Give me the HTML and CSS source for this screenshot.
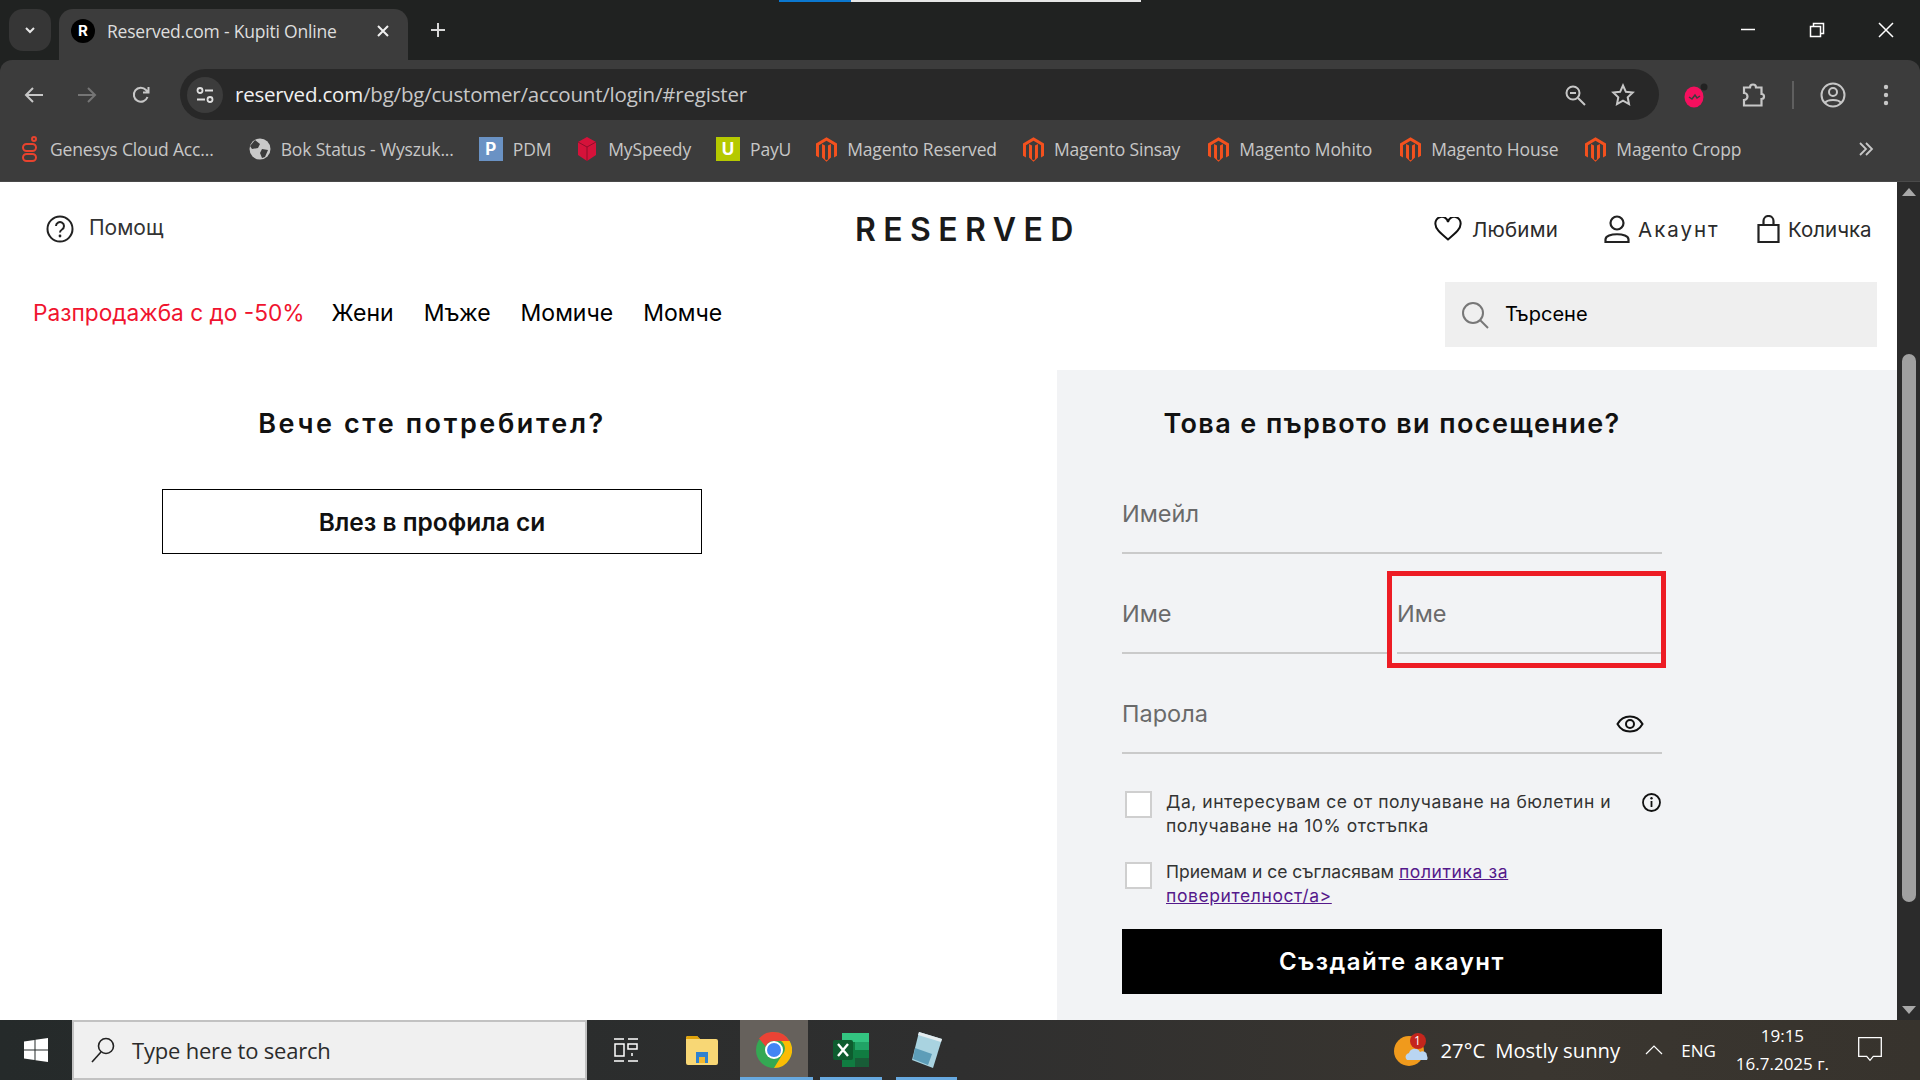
FILE: index.html
```html
<!DOCTYPE html>
<html lang="bg">
<head>
<meta charset="utf-8">
<title>Reserved.com - Kupiti Online</title>
<link rel="stylesheet" href="styles.css">
</head>
<body>
<svg class="defs" width="0" height="0" aria-hidden="true">
  <symbol id="magento" viewBox="0 0 24 28">
    <path fill="#f4511e" d="M12 0 24 7v14l-3.400 2V9L12 4 3.400 9v14L0 21V7z"/>
    <path fill="#f4511e" d="M10.300 9.500v15.700L12 26.200l1.700-1V9.500l3.400-1.900v15.500L12 28l-5.100-4.900V7.600z"/>
  </symbol>
</svg>

<div class="loadbar"><span class="load-blue"></span><span class="load-white"></span></div>

<header class="tabstrip">
  <div class="tab-search"><svg width="14" height="14" viewBox="0 0 14 14"><path d="M3 5l4 4 4-4" fill="none" stroke="#e6e6e6" stroke-width="2"/></svg></div>
  <div class="tab">
    <span class="favicon">R</span>
    <span class="tab-title">Reserved.com - Kupiti Online</span>
    <svg class="tab-close" width="14" height="14" viewBox="0 0 14 14"><path d="M2 2l10 10M12 2L2 12" stroke="#f0f0f0" stroke-width="2"/></svg>
  </div>
  <svg class="new-tab" width="18" height="18" viewBox="0 0 18 18"><path d="M9 2v14M2 9h14" stroke="#d8d8d8" stroke-width="2"/></svg>
  <div class="win-controls">
    <svg width="16" height="16" viewBox="0 0 16 16"><path d="M1 7.500h14" stroke="#fff" stroke-width="1.500"/></svg>
    <svg width="16" height="16" viewBox="0 0 16 16"><path d="M1.500 4.500h10v10h-10zM4.500 4.500v-3h10v10h-3" fill="none" stroke="#fff" stroke-width="1.500"/></svg>
    <svg width="16" height="16" viewBox="0 0 16 16"><path d="M1 1l14 14M15 1L1 15" stroke="#fff" stroke-width="1.500"/></svg>
  </div>
</header>

<div class="toolbar">
  <svg class="nav-btn" width="22" height="22" viewBox="0 0 22 22"><path d="M20 11H3M10 4l-7 7 7 7" fill="none" stroke="#c7c7c7" stroke-width="2"/></svg>
  <svg class="nav-btn" width="22" height="22" viewBox="0 0 22 22"><path d="M2 11h17M12 4l7 7-7 7" fill="none" stroke="#757575" stroke-width="2"/></svg>
  <svg class="nav-btn" width="22" height="22" viewBox="0 0 22 22"><path d="M17.500 13a7 7 0 1 1-1.500-7l2 2M18.500 3v5.500H13" fill="none" stroke="#c7c7c7" stroke-width="2"/></svg>
  <div class="omnibox">
    <span class="site-info"><svg width="20" height="20" viewBox="0 0 20 20"><g fill="none" stroke="#e0e0e0" stroke-width="1.800"><circle cx="5" cy="5.500" r="2.500"/><circle cx="15" cy="14.500" r="2.500"/><path d="M10 5.500h8M2 14.500h8"/></g></svg></span>
    <span class="url">reserved.com<span class="url-dim">/bg/bg/customer/account/login/#register</span></span>
    <svg class="omni-icon" width="24" height="24" viewBox="0 0 24 24"><g fill="none" stroke="#c7c7c7" stroke-width="2"><circle cx="10" cy="10" r="6.500"/><path d="M7 10h6M15 15l7 7"/></g></svg>
    <svg class="omni-icon" width="24" height="24" viewBox="0 0 24 24"><path d="M12 2.500l2.900 6.300 6.800.8-5 4.700 1.300 6.800-6-3.400-6 3.400 1.300-6.800-5-4.700 6.800-.8z" fill="none" stroke="#c7c7c7" stroke-width="2"/></svg>
  </div>
  <svg class="ext" width="26" height="26" viewBox="0 0 26 26"><ellipse cx="11" cy="15" rx="9.500" ry="10.500" fill="#f50f5e"/><path d="M6 15l3 2 3-4 2 3 3-2" fill="none" stroke="#3c3c3c" stroke-width="1.500"/><circle cx="21" cy="5" r="3.500" fill="#222"/></svg>
  <svg class="ext-puzzle" width="26" height="26" viewBox="0 0 26 26"><path d="M3 5.500h6a3 3 0 0 1 6 0h5.500v6.500a2.500 2.500 0 0 1 0 5v6.500H3V18a3 3 0 0 0 0-7z" fill="none" stroke="#c7c7c7" stroke-width="2.200"/></svg>
  <span class="tool-sep"></span>
  <svg class="profile" width="26" height="26" viewBox="0 0 26 26"><g fill="none" stroke="#c7c7c7" stroke-width="2"><circle cx="13" cy="13" r="11.500"/><circle cx="13" cy="10" r="4"/><path d="M5 21c2-4 14-4 16 0"/></g></svg>
  <svg class="menu" width="6" height="24" viewBox="0 0 6 24"><g fill="#c7c7c7"><circle cx="3" cy="4" r="2.200"/><circle cx="3" cy="12" r="2.200"/><circle cx="3" cy="20" r="2.200"/></g></svg>
</div>

<nav class="bookmarks">
  <span class="bm bm-genesys"><svg width="20" height="28" viewBox="0 0 20 28"><g fill="none" stroke="#e8432e" stroke-width="2"><circle cx="14" cy="4" r="2"/><rect x="3" y="9" width="13" height="7" rx="3.500"/><rect x="3" y="19" width="13" height="7" rx="3.500"/></g></svg>Genesys Cloud Acc...</span>
  <span class="bm bm-bok"><svg width="22" height="22" viewBox="0 0 22 22"><circle cx="11" cy="11" r="10.500" fill="#c9c9c9"/><path d="M6 2l5 4-2 4-6 1-2-3zM13 11l6 1-3 7-3 1-2-5z" fill="#3c3c3c"/></svg>Bok Status - Wyszuk...</span>
  <span class="bm bm-pdm"><span class="bm-square bm-blue">P</span>PDM</span>
  <span class="bm bm-speedy"><svg width="22" height="26" viewBox="0 0 22 26"><path d="M11 1l9 5v13l-9 6-9-6V6z" fill="#d5123a"/><path d="M2 6l9 5 9-5M11 11v14" fill="none" stroke="#8e0e2a" stroke-width="1"/></svg>MySpeedy</span>
  <span class="bm bm-payu"><span class="bm-square bm-lime">U</span>PayU</span>
  <span class="bm bm-m1"><svg width="21" height="25"><use href="#magento"/></svg>Magento Reserved</span>
  <span class="bm bm-m2"><svg width="21" height="25"><use href="#magento"/></svg>Magento Sinsay</span>
  <span class="bm bm-m3"><svg width="21" height="25"><use href="#magento"/></svg>Magento Mohito</span>
  <span class="bm bm-m4"><svg width="21" height="25"><use href="#magento"/></svg>Magento House</span>
  <span class="bm bm-m5"><svg width="21" height="25"><use href="#magento"/></svg>Magento Cropp</span>
  <svg class="bm-more" width="16" height="14" viewBox="0 0 16 14"><path d="M2 1l6 6-6 6M8 1l6 6-6 6" fill="none" stroke="#c7c7c7" stroke-width="1.800"/></svg>
</nav>

<div class="viewport">
  <main class="page">
    <div class="top-row">
      <a class="help"><svg width="28" height="28" viewBox="0 0 28 28"><circle cx="14" cy="14" r="12.500" fill="none" stroke="#222" stroke-width="2"/><path d="M10 11a4 4 0 1 1 6 3.500c-1.500.9-2 1.500-2 3" fill="none" stroke="#222" stroke-width="2"/><circle cx="14" cy="21" r="1.400" fill="#222"/></svg><span>Помощ</span></a>
      <div class="logo">RESERVED</div>
      <div class="user-links">
        <a class="user-link link-fav"><svg width="28" height="24" viewBox="0 0 28 24"><path d="M14 22.500C5 15 1.500 11.500 1.500 7.500A6 6 0 0 1 14 5a6 6 0 0 1 12.500 2.500c0 4-3.500 7.500-12.500 15z" fill="none" stroke="#111" stroke-width="2"/></svg><span>Любими</span></a>
        <a class="user-link link-acc"><svg width="26" height="28" viewBox="0 0 26 28"><g fill="none" stroke="#222" stroke-width="2.200"><circle cx="13" cy="8" r="6.500"/><path d="M1.500 27v-2.500c0-7 23-7 23 0V27z"/></g></svg><span>Акаунт</span></a>
        <a class="user-link link-bag"><svg width="23" height="28" viewBox="0 0 23 28"><g fill="none" stroke="#222" stroke-width="2.200"><path d="M1.500 10h20v17h-20z"/><path d="M6.500 10V6a5 5 0 0 1 10 0v4"/></g></svg><span>Количка</span></a>
      </div>
    </div>
    <div class="nav-row">
      <nav class="main-nav">
        <a class="sale">Разпродажба с до -50%</a>
        <a>Жени</a>
        <a>Мъже</a>
        <a>Момиче</a>
        <a>Момче</a>
      </nav>
      <div class="search"><svg width="28" height="28" viewBox="0 0 28 28"><g fill="none" stroke="#777" stroke-width="2"><circle cx="12" cy="12" r="10"/><path d="M19 19l8 8"/></g></svg><span class="search-text">Търсене</span></div>
    </div>
    <div class="split">
      <section class="login">
        <h2 class="head-login">Вече сте потребител?</h2>
        <button class="btn-outline" type="button">Влез в профила си</button>
      </section>
      <section class="register">
        <h2 class="head-register">Това е първото ви посещение?</h2>
        <div class="field field-first">Имейл</div>
        <div class="field-row">
          <div class="field">Име</div>
          <div class="field field-marked">Име<span class="marker"></span></div>
        </div>
        <div class="field field-pass">Парола
          <svg class="eye" width="28" height="22" viewBox="0 0 28 22"><g fill="none" stroke="#111" stroke-width="2"><path d="M1.500 11C7 1 21 1 26.500 11 21 21 7 21 1.500 11z"/><circle cx="14" cy="11" r="4"/></g></svg>
        </div>
        <div class="check check-first">
          <span class="box"></span>
          <p class="check-text">Да, интересувам се от получаване на бюлетин и получаване на 10% отстъпка</p>
          <svg class="info" width="19" height="19" viewBox="0 0 19 19"><g fill="none" stroke="#111" stroke-width="1.800"><circle cx="9.500" cy="9.500" r="8.500"/><path d="M9.500 8v6"/></g><circle cx="9.500" cy="5.200" r="1.200" fill="#111"/></svg>
        </div>
        <div class="check check-second">
          <span class="box"></span>
          <p class="check-text">Приемам и се съгласявам <a class="policy">политика за поверителност/а&gt;</a></p>
        </div>
        <button class="btn-black" type="button">Създайте акаунт</button>
      </section>
    </div>
  </main>
  <aside class="scrollbar">
    <span class="arrow-up"></span>
    <span class="thumb"></span>
    <span class="arrow-down"></span>
  </aside>
</div>

<footer class="taskbar">
  <div class="start"><svg width="24" height="24" viewBox="0 0 24 24"><path fill="#fff" d="M0 3.500 10.500 2v9.500H0zM11.500 1.800 24 0v11.500H11.500zM0 12.500h10.500V22L0 20.500zM11.500 12.500H24V24l-12.500-1.800z"/></svg></div>
  <div class="task-search"><svg width="26" height="28" viewBox="0 0 26 28"><g fill="none" stroke="#222" stroke-width="1.600"><circle cx="16" cy="10" r="7.500"/><path d="M11 16 2 26"/></g></svg><span>Type here to search</span></div>
  <div class="task-icons">
    <span class="task-item task-view"><svg width="25" height="24" viewBox="0 0 25 24"><g fill="none" stroke="#fff" stroke-width="1.500"><path d="M0 1h10M14 1h10M0 23h10M14 23h10"/><path d="M1 6h9v12H1zM14 6h9v5h-9zM18 15v3"/></g></svg></span>
    <span class="task-item task-files"><svg width="32" height="30" viewBox="0 0 32 30"><path d="M0 3a2 2 0 0 1 2-2h9l3 3h16a2 2 0 0 1 2 2v22a2 2 0 0 1-2 2H2a2 2 0 0 1-2-2z" fill="#f8d775"/><path d="M0 3a2 2 0 0 1 2-2h9l3 3H0z" fill="#e0a30a"/><path d="M10 28V17h12v11h-3v-6h-6v6z" fill="#2f82d0"/><path d="M13 22h6v6h-6z" fill="#f2b82f"/></svg></span>
    <span class="task-item task-chrome active"><svg width="36" height="36" viewBox="0 0 36 36"><circle cx="18" cy="18" r="18" fill="#34a853"/><path d="M18 0a18 18 0 0 1 15.600 9H18a9 9 0 0 0-8.300 5.500L3 6.500A18 18 0 0 1 18 0z" fill="#ea4335"/><path d="M33.600 9A18 18 0 0 1 18 36l8-13a9 9 0 0 0-1-14z" fill="#fbbc05"/><circle cx="18" cy="18" r="9" fill="#fff"/><circle cx="18" cy="18" r="7" fill="#4285f4"/></svg></span>
    <span class="task-item task-excel active"><svg width="36" height="34" viewBox="0 0 36 34"><path d="M9 0h27v34H9z" fill="#107c41"/><path d="M9 0h27v9H9z" fill="#33c481"/><path d="M22 9h14v8H22z" fill="#21a366"/><path d="M22 25h14v9H22z" fill="#185c37"/><rect y="7" width="20" height="20" rx="2" fill="#0e5c2f"/><path d="M5 11l10 12M15 11 5 23" stroke="#fff" stroke-width="2.400"/></svg></span>
    <span class="task-item task-note active"><svg width="30" height="36" viewBox="0 0 30 36"><path d="M7 0l23 7-9 29-21-8z" fill="#a9d3e0"/><path d="M7 0l23 7-1 3L6 3z" fill="#e4ecef"/><path d="M3 16l17 6-4 11-15-6z" fill="#5d9db8"/></svg></span>
  </div>
  <div class="tray">
    <span class="weather"><svg width="34" height="34" viewBox="0 0 34 34"><circle cx="15" cy="18" r="15" fill="#f09a1c"/><path d="M13 27a4 4 0 0 1 2-7 6 6 0 0 1 11-1 4.500 4.500 0 0 1 7 4 4 4 0 0 1 0 4z" fill="#b9d5f2"/><circle cx="24" cy="8" r="8" fill="#c4261d"/></svg><span class="badge">1</span></span>
    <span class="temp">27°C</span>
    <span class="sky">Mostly sunny</span>
    <svg class="caret" width="18" height="10" viewBox="0 0 18 10"><path d="M1 9l8-8 8 8" fill="none" stroke="#fff" stroke-width="1.200"/></svg>
    <span class="lang">ENG</span>
    <span class="clock"><span>19:15</span><span>16.7.2025 г.</span></span>
    <svg class="notify" width="24" height="26" viewBox="0 0 24 26"><path d="M.7.7h22.600v18.600h-8l-3.300 4-3.300-4h-8z" fill="none" stroke="#fff" stroke-width="1.300"/></svg>
  </div>
</footer>
</body>
</html>
```

FILE: styles.css
```css
* { box-sizing: border-box; }
html, body { margin: 0; padding: 0; }
body {
  width: 1920px;
  height: 1080px;
  overflow: hidden;
  display: flex;
  flex-direction: column;
  position: relative;
  background: #202221;
  font-family: "Inter", "Noto Sans", sans-serif;
  color: #111;
}
.defs { position: absolute; }
svg { display: block; flex: none; }

/* Browser chrome */
.loadbar { position: absolute; left: 779px; top: 0; display: flex; height: 2px; }
.load-blue { width: 72px; background: #0b78d0; }
.load-white { width: 290px; background: #e6e6e6; }

.tabstrip {
  height: 60px;
  flex: none;
  display: flex;
  align-items: flex-end;
  padding-left: 9px;
  background: #202221;
  color: #e6e6e6;
  font-family: "Open Sans", sans-serif;
}
.tab-search {
  width: 42px; height: 42px; align-self: flex-start; margin-top: 9px;
  border-radius: 14px; background: #363636;
  display: flex; align-items: center; justify-content: center;
}
.tab {
  margin-left: 8px; width: 349px; height: 51px;
  display: flex; align-items: center; padding: 0 18px 8px 12px;
  background: #3c3c3c; border-radius: 14px 14px 0 0;
}
.favicon {
  width: 24px; height: 24px; border-radius: 50%; background: #000; color: #fff;
  display: flex; align-items: center; justify-content: center;
  font: 700 15px "Inter", sans-serif;
}
.tab-title { margin-left: 12px; font-size: 17.500px; letter-spacing: -.2px; flex: 1; white-space: nowrap; color: #dedede; }
.new-tab { margin: 0 0 21px 21px; }
.win-controls { margin-left: auto; align-self: flex-start; display: flex; gap: 53px; padding: 22px 26px 0 0; }

.toolbar {
  height: 60px; flex: none; display: flex; align-items: center;
  padding-left: 23px;
  background: #3c3c3c; border-radius: 12px 12px 0 0;
}
.nav-btn { margin: 9px 31px 0 0; }
.nav-btn:nth-child(3) { margin: 9px 0 0 1px; }
.omnibox {
  margin-left: 28px; width: 1479px; height: 51px; margin-top: 9px;
  display: flex; align-items: center; padding: 0 24px 0 7px;
  background: #282828; border-radius: 26px;
  font-family: "Open Sans", sans-serif;
}
.site-info {
  width: 36px; height: 36px; border-radius: 50%; background: #3c3c3c;
  display: flex; align-items: center; justify-content: center;
}
.url { margin-left: 12px; font-size: 20.500px; color: #f0f0f0; flex: 1; letter-spacing: -.2px; white-space: nowrap; margin-top: -2px; }
.url-dim { color: #c7c7c7; }
.omni-icon { margin-left: 24px; }
.toolbar > .ext { margin: 9px 0 0 24px; }
.ext-puzzle { margin: 9px 0 0 32px; }
.tool-sep { width: 2px; height: 28px; background: #5f5f5f; margin: 9px 0 0 25px; }
.profile { margin: 9px 0 0 26px; }
.menu { margin: 9px 0 0 37px; }

.bookmarks {
  height: 62px; flex: none; display: flex; align-items: center;
  background: #3c3c3c; border-bottom: 1px solid #4a4a4a;
  font-family: "Open Sans", sans-serif; font-size: 17.500px; color: #c7c7c7; letter-spacing: -.15px;
  padding: 0 0 3px 20px;
}
.bm { display: flex; align-items: center; gap: 10px; white-space: nowrap; }
.bm-bok { margin-left: 35px; }
.bm-pdm, .bm-speedy, .bm-payu, .bm-m1 { margin-left: 25px; }
.bm-m2 { margin-left: 26px; }
.bm-m3, .bm-m4 { margin-left: 28px; }
.bm-m5 { margin-left: 27px; }
.bm-square {
  width: 24px; height: 24px; display: flex; align-items: center; justify-content: center;
  font: 700 17px "Inter", sans-serif; color: #fff;
}
.bm-blue { background: #6a92c4; }
.bm-lime { background: #b5c900; }
.bm-more { margin-left: auto; margin-right: 46px; }

/* Page */
.viewport { flex: 1; min-height: 0; display: flex; background: #fff; }
.page { flex: 1; min-width: 0; display: flex; flex-direction: column; }

.top-row {
  height: 94px; flex: none; display: flex; align-items: center;
  padding: 0 26px 0 46px;
}
.help { display: flex; align-items: center; gap: 15px; font-size: 21px; color: #333; width: 600px; }
.help span { margin-top: -4px; }
.logo {
  margin-left: 209px; font-size: 32px; font-weight: 600; letter-spacing: 7.400px; color: #1a1a1a;
  white-space: nowrap;
}
.user-links { margin-left: auto; display: flex; }
.user-link { display: flex; align-items: center; font-size: 20.500px; color: #2b2b2b; white-space: nowrap; }
.link-fav { gap: 10px; width: 170px; letter-spacing: .2px; }
.link-acc { gap: 8px; width: 153px; letter-spacing: 2px; }
.link-bag { gap: 8px; width: 114px; }

.nav-row {
  height: 94px; flex: none; display: flex; align-items: center; justify-content: space-between;
  padding: 0 20px 17px 33px;
}
.main-nav { display: flex; gap: 30px; font-size: 23px; color: #000; white-space: nowrap; margin-top: -4px; }
.sale { color: #f0142f; font-size: 22.700px; margin-right: -3px; }
.search {
  width: 432px; height: 65px; display: flex; align-items: center; gap: 16px;
  padding-left: 16px; background: #efefef; font-size: 20px; color: #000;
}
.search-text { margin-top: -2px; }

.split { flex: 1; min-height: 0; display: flex; }
.login { width: 864px; margin-right: 193px; display: flex; flex-direction: column; align-items: center; padding-top: 39px; }
h2 { margin: 0; font-size: 27px; font-weight: 600; line-height: 30px; color: #111; white-space: nowrap; flex: none; }
.head-login { letter-spacing: 2.600px; }
.head-register { letter-spacing: 1.400px; width: 540px; text-align: center; margin-bottom: 61px; }
.btn-outline {
  margin-top: 50px; width: 540px; height: 65px; background: #fff; border: 1px solid #000;
  font: 600 24.500px "Inter", sans-serif; color: #111; padding: 0; flex: none;
}
.register {
  flex: 1; min-width: 0; padding: 39px 0 0 65px; background: #f2f3f5;
  display: flex; flex-direction: column; overflow: hidden;
}
.field {
  flex: none; height: 100px; position: relative; display: flex; align-items: flex-start;
  padding-top: 46px; border-bottom: 2px solid #cacaca; width: 540px;
  font-size: 23.500px; color: #6a6a6a; line-height: 28px;
}
.field-first { height: 54px; padding-top: 0; }
.field-row { display: flex; gap: 10px; width: 540px; flex: none; }
.field-row .field { width: 265px; }
.eye { position: absolute; right: 18px; top: 59px; }
.marker {
  position: absolute; left: -10px; right: -4px; top: 17px; height: 97px;
  border: 5px solid #ed1c24;
}
.check { display: flex; align-items: flex-start; width: 540px; font-size: 17.500px; line-height: 24px; letter-spacing: .55px; color: #333; flex: none; padding-left: 3px; }
.check-first { margin-top: 37px; }
.check-second { margin-top: 24px; letter-spacing: 0; }
.box { width: 27px; height: 27px; background: #fff; border: 2px solid #cfcfcf; flex: none; }
.check-text { margin: -1px 0 0 14px; width: 462px; }
.check-second .check-text { width: 400px; margin-top: -2px; }
.info { margin: 2px 0 0 14px; }
.policy { color: #55198b; text-decoration: underline; letter-spacing: .6px; }
.btn-black {
  margin-top: 21px; width: 540px; height: 65px; background: #000; border: 0; padding: 0; flex: none;
  font: 600 24px "Inter", sans-serif; letter-spacing: 1.500px; color: #fff;
}

/* Scrollbar */
.scrollbar { width: 23px; flex: none; background: #2b2b2b; display: flex; flex-direction: column; align-items: center; }
.arrow-up { width: 0; height: 0; margin-top: 6px; border: 7.500px solid transparent; border-top: 0; border-bottom: 8px solid #a8a8a8; }
.thumb { width: 14px; height: 548px; margin-top: 158px; border-radius: 7px; background: #a0a0a0; }
.arrow-down { width: 0; height: 0; margin-top: auto; margin-bottom: 6px; border: 7.500px solid transparent; border-bottom: 0; border-top: 8px solid #a8a8a8; }

/* Taskbar */
.taskbar {
  height: 60px; flex: none; display: flex; align-items: stretch;
  background: linear-gradient(90deg, #252a2a 0, #2f2f2f 50%, #3a3630 80%, #37332d 100%);
  color: #fff; font-family: "Open Sans", sans-serif;
}
.start { width: 72px; display: flex; align-items: center; justify-content: center; }
.task-search {
  width: 515px; display: flex; align-items: center; gap: 16px; padding-left: 16px;
  background: #f0f0f0; border: 2px solid #c2c2c2;
  color: #2b2b2b; font-size: 22px; letter-spacing: -.2px;
}
.task-icons { display: flex; margin-left: 1px; }
.task-item { display: flex; align-items: center; justify-content: center; position: relative; }
.task-view { width: 76px; }
.task-files { width: 76px; }
.task-chrome { width: 68px; background: #66615c; }
.task-excel { width: 62px; margin-left: 12px; }
.task-note { width: 61px; margin-left: 14px; }
.active::after { content: ""; position: absolute; left: 0; right: 0; bottom: 0; height: 3px; background: #67a9e0; }
.task-chrome.active::after { right: -5px; }
.tray { margin-left: auto; display: flex; align-items: center; font-size: 20.300px; }
.weather { margin-right: 13px; position: relative; width: 34px; height: 34px; }
.badge { position: absolute; left: 16px; top: 0; width: 16px; height: 16px; font-size: 12px; line-height: 16px; text-align: center; color: #fff; }
.temp { margin-right: 10px; white-space: nowrap; }
.sky { margin-right: 25px; white-space: nowrap; }
.caret { margin-right: 18px; }
.lang { font-size: 17px; margin-right: 20px; }
.clock { display: flex; flex-direction: column; align-items: center; font-size: 17px; line-height: 28px; margin-right: 29px; white-space: nowrap; }
.notify { margin-right: 38px; }
```
